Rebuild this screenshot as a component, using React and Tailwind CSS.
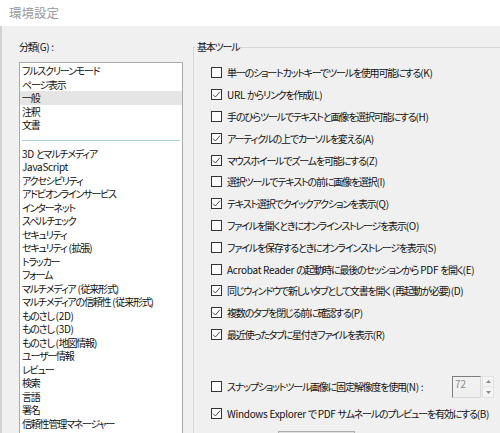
import React from 'react';

const font = "font-['Noto_Sans_CJK_JP',sans-serif] [font-feature-settings:'palt']";

const topItems = ['フルスクリーンモード', 'ページ表示', '一般', '注釈', '文書'];
const moreItems = [
  '3D とマルチメディア',
  'JavaScript',
  'アクセシビリティ',
  'アドビオンラインサービス',
  'インターネット',
  'スペルチェック',
  'セキュリティ',
  'セキュリティ (拡張)',
  'トラッカー',
  'フォーム',
  'マルチメディア (従来形式)',
  'マルチメディアの信頼性 (従来形式)',
  'ものさし (2D)',
  'ものさし (3D)',
  'ものさし (地図情報)',
  'ユーザー情報',
  'レビュー',
  '検索',
  '言語',
  '署名',
  '信頼性管理マネージャー',
];

const options = [
  ['単一のショートカットキーでツールを使用可能にする(K)', false],
  ['URL からリンクを作成(L)', true],
  ['手のひらツールでテキストと画像を選択可能にする(H)', false],
  ['アーティクルの上でカーソルを変える(A)', true],
  ['マウスホイールでズームを可能にする(Z)', true],
  ['選択ツールでテキストの前に画像を選択(I)', false],
  ['テキスト選択でクイックアクションを表示(Q)', true],
  ['ファイルを開くときにオンラインストレージを表示(O)', false],
  ['ファイルを保存するときにオンラインストレージを表示(S)', false],
  ['Acrobat Reader の起動時に最後のセッションから PDF を開く(E)', false],
  ['同じウィンドウで新しいタブとして文書を開く (再起動が必要)(D)', true],
  ['複数のタブを閉じる前に確認する(P)', true],
  ['最近使ったタブに星付きファイルを表示(R)', true],
];

// 和文は詰めて、英数字はほぼそのまま
function Txt({ children }) {
  return children.split(/([\x20-\x7e]+)/).map((p, i) =>
    p === '' ? null : (
      <span key={i} className={i % 2 ? 'tracking-[-0.3px]' : 'tracking-[-1.2px]'}>
        {p}
      </span>
    )
  );
}

function Check({ checked }) {
  return (
    <span className="w-[11px] h-[11px] shrink-0 border border-[#333] bg-white flex items-center justify-center">
      {checked && (
        <svg width="9" height="9" viewBox="0 0 9 9" fill="none">
          <path d="M1 4.6 L3.4 7 L8 1.6" stroke="#333" strokeWidth="0.9" />
        </svg>
      )}
    </span>
  );
}

function Option({ label, checked, className = '' }) {
  return (
    <div className={`flex items-center h-[21.8px] gap-[5px] ${className}`}>
      <Check checked={checked} />
      <span className="whitespace-nowrap">
        <Txt>{label}</Txt>
      </span>
    </div>
  );
}

export default function App() {
  return (
    <div className={`w-[500px] h-[433px] overflow-hidden bg-[#f0f0f0] text-[#111] text-[10px] flex flex-col ${font}`}>
      <div className="h-[26px] shrink-0 bg-white flex items-center px-[9px] text-[12.5px] text-[#999]">
        環境設定
      </div>

      <div className="flex items-start border-l-2 border-[#d2d2d2] pt-[14px] flex-1">
        {/* 分類 */}
        <div className="pl-[17px] shrink-0">
          <div className="leading-[14px]">
            <Txt>分類(G) :</Txt>
          </div>
          <div className="mt-[8px] w-[164px] h-[420px] bg-white border border-[#a9a9a9] py-[1px]">
            {topItems.map((t) => (
              <div
                key={t}
                className={`h-[13.5px] leading-[13.5px] px-[2px] whitespace-nowrap ${t === '一般' ? 'bg-[#e5e5e5]' : ''}`}
              >
                <Txt>{t}</Txt>
              </div>
            ))}
            <div className="pt-[8px] pb-[6px] px-[2px]">
              <div className="h-px bg-[#a6cdd6]" />
            </div>
            {moreItems.map((t) => (
              <div key={t} className="h-[13.5px] leading-[13.5px] px-[2px] whitespace-nowrap">
                <Txt>{t}</Txt>
              </div>
            ))}
          </div>
        </div>

        {/* 基本ツール */}
        <fieldset className="ml-[10px] flex-1 min-w-0 border-t border-l border-[#d7d7d7] pl-[17px] pr-[6px]">
          <legend className="ml-[-15px] px-[1px] leading-[14px]">
            <Txt>基本ツール</Txt>
          </legend>
          <div className="pt-[8px]">
            {options.map(([label, checked]) => (
              <Option key={label} label={label} checked={checked} />
            ))}
            <div className="flex items-center h-[21.8px] mt-[30.7px]">
              <Check checked={false} />
              <span className="ml-[5px] whitespace-nowrap">
                <Txt>スナップショットツール画像に固定解像度を使用(N) :</Txt>
              </span>
              <div className="ml-auto flex items-stretch h-[22px]">
                <div className="w-[29px] border-t border-l border-[#7d7d7d] border-r border-b border-r-[#d8d8d8] border-b-[#d8d8d8] bg-[#f0f0f0] text-[#8c8c8c] pl-[2px] leading-[14px]">
                  72
                </div>
                <div className="w-[12px] ml-[1px] flex flex-col">
                  <div className="flex-1 bg-[#f4f4f4] border border-[#e2e2e2] flex items-center justify-center">
                    <svg width="5" height="3" viewBox="0 0 5 3"><path d="M0 3 L2.5 0 L5 3Z" fill="#8a8a8a" /></svg>
                  </div>
                  <div className="flex-1 bg-[#f4f4f4] border border-t-0 border-[#e2e2e2] flex items-center justify-center">
                    <svg width="5" height="3" viewBox="0 0 5 3"><path d="M0 0 L2.5 3 L5 0Z" fill="#8a8a8a" /></svg>
                  </div>
                </div>
              </div>
            </div>
            <Option
              className="mt-[5px]"
              label="Windows Explorer で PDF サムネールのプレビューを有効にする(B)"
              checked={true}
            />
            <div className="mt-[6px] ml-[67px] w-[77px] h-[20px] border border-[#adadad] bg-[#e1e1e1]" />
          </div>
        </fieldset>
      </div>
    </div>
  );
}
